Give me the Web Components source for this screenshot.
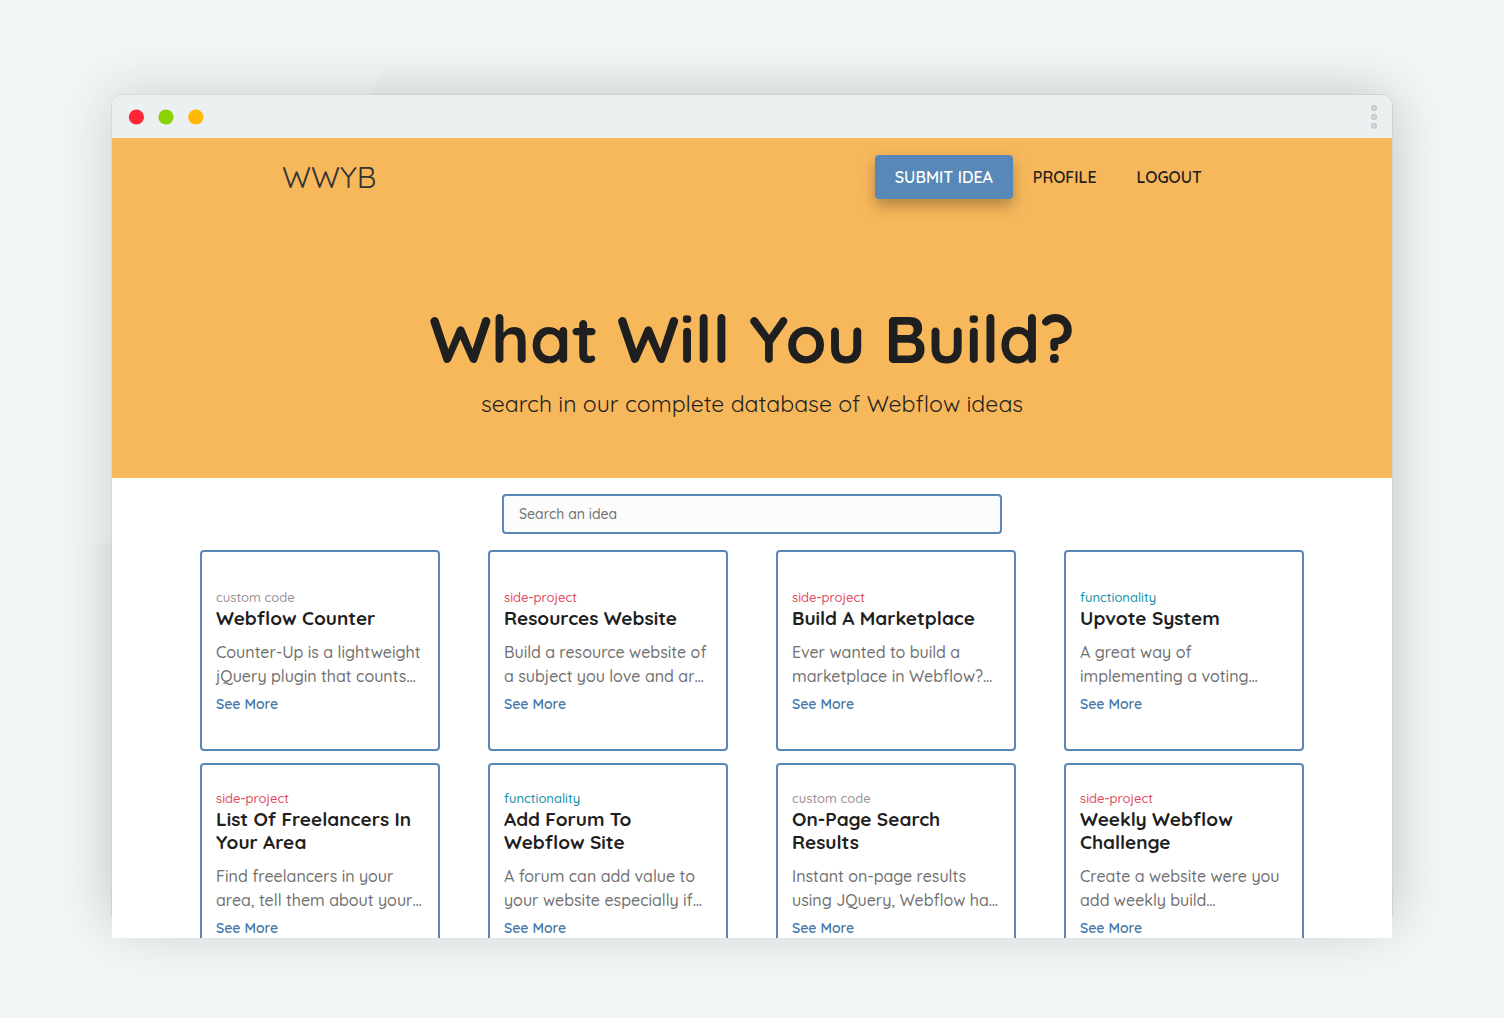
<!DOCTYPE html>
<html lang="en">
<head>
<meta charset="utf-8">
<meta name="viewport" content="width=device-width, initial-scale=1">
<title>What Will You Build?</title>
<style>
*{
    box-sizing: border-box;
}
:root{
    --color-blue: #5788b7;
    --color-hero: #f7b85c;
    --color-ink: #1f1f1f;
    --color-page: #f2f6f7;
}
body{
    margin: 0;
    height: 100vh;
    padding: 94px 111px 80px;
    display: flex;
    flex-direction: column;
    overflow: hidden;
    background: var(--color-page);
    color: var(--color-ink);
    font-family: Quicksand, Lato, sans-serif;
}
</style>
</head>
<body>
<browser-window>
    <site-hero>
        <site-nav slot="nav">
            <nav-link primary>SUBMIT IDEA</nav-link>
            <nav-link>PROFILE</nav-link>
            <nav-link>LOGOUT</nav-link>
        </site-nav>
        What Will You Build?
        <span slot="subtitle">search in our complete database of Webflow ideas</span>
    </site-hero>
    <search-box placeholder="Search an idea"></search-box>
    <idea-grid>
        <idea-card tag="custom code" name="Webflow Counter">Counter-Up is a lightweight<br>jQuery plugin that counts…</idea-card>
        <idea-card tag="side-project" name="Resources Website">Build a resource website of<br>a subject you love and ar…</idea-card>
        <idea-card tag="side-project" name="Build A Marketplace">Ever wanted to build a<br>marketplace in Webflow?…</idea-card>
        <idea-card tag="functionality" name="Upvote System">A great way of<br>implementing a voting…</idea-card>
        <idea-card tag="side-project" name="List Of Freelancers In Your Area">Find freelancers in your<br>area, tell them about your…</idea-card>
        <idea-card tag="functionality" name="Add Forum To Webflow Site">A forum can add value to<br>your website especially if…</idea-card>
        <idea-card tag="custom code" name="On-Page Search Results">Instant on-page results<br>using JQuery, Webflow ha…</idea-card>
        <idea-card tag="side-project" name="Weekly Webflow Challenge">Create a website were you<br>add weekly build…</idea-card>
    </idea-grid>
</browser-window>

<script>
//window chrome around the page, content goes in the slot
class BrowserWindow extends HTMLElement{
    constructor(){
        super();
        this.attachShadow({ mode: 'open' });
        this.shadowRoot.innerHTML = `
        <style>
        :host{
            position: relative;
            display: flex;
            flex-direction: column;
            flex: 1;
            min-height: 0;
            padding: 1px 1px 0;
        }
        /* outline and shadow stop a little above the bottom of the page */
        .outline{
            position: absolute;
            inset: 0 0 12px;
            border: 1px solid #cdd2d3;
            border-radius: 11px;
            box-shadow: 0 0 56px rgba(0, 0, 0, 0.2);
        }
        .blob{
            position: absolute;
            left: -51px;
            top: -94px;
            width: 340px;
            height: 560px;
            fill: var(--color-page);
            opacity: 0.24;
        }
        header{
            position: relative;
            display: flex;
            align-items: center;
            justify-content: space-between;
            flex: none;
            height: 43px;
            padding: 0 14px 0 16px;
            background: #ebf0f0;
            border-radius: 10px 10px 0 0;
        }
        svg{
            display: block;
        }
        main{
            position: relative;
            flex: 1;
            min-height: 0;
            overflow: hidden;
            background: white;
        }
        </style>
        <div class="outline"></div>
        <svg class="blob" viewBox="0 0 340 560" aria-hidden="true"><path d="M0 0H332C336 40 332 68 309 94C260 150 200 240 160 340C130 430 110 544 40 544C22 544 6 532 0 518Z"/></svg>
        <header>
            <svg width="76" height="16" aria-hidden="true">
                <circle cx="8.4" cy="8" r="7.6" fill="#ff2636"/>
                <circle cx="38" cy="8" r="7.6" fill="#8ad200"/>
                <circle cx="67.8" cy="8" r="7.6" fill="#ffb700"/>
            </svg>
            <svg width="8" height="26" fill="#d9dedf" stroke="#c1c7ca" stroke-width="1.5" aria-hidden="true">
                <circle cx="4" cy="4" r="2.3"/>
                <circle cx="4" cy="13" r="2.3"/>
                <circle cx="4" cy="21.7" r="2.3"/>
            </svg>
        </header>
        <main><slot></slot></main>
        `;
    }
}
customElements.define('browser-window', BrowserWindow);

//orange area, title is the default slot
class SiteHero extends HTMLElement{
    constructor(){
        super();
        this.attachShadow({ mode: 'open' });
        this.shadowRoot.innerHTML = `
        <style>
        :host{
            display: block;
            padding: 17px 32px 58px;
            background: var(--color-hero);
            text-align: center;
        }
        h1{
            margin: 100px 0 0;
            font-size: 66px;
            line-height: 80px;
            font-weight: 700;
        }
        p{
            margin: 9px 0 0;
            font-size: 23px;
            line-height: 32px;
            font-weight: 400;
        }
        </style>
        <slot name="nav"></slot>
        <h1><slot></slot></h1>
        <p><slot name="subtitle"></slot></p>
        `;
    }
}
customElements.define('site-hero', SiteHero);

class SiteNav extends HTMLElement{
    constructor(){
        super();
        this.attachShadow({ mode: 'open' });
        this.shadowRoot.innerHTML = `
        <style>
        :host{
            display: block;
            max-width: 940px;
            margin: 0 auto;
        }
        nav{
            display: flex;
            align-items: center;
        }
        .logo{
            margin-right: auto;
            color: #333;
            font-size: 30px;
            line-height: 42px;
            font-weight: 400;
            text-decoration: none;
        }
        </style>
        <nav>
            <a class="logo" href="#">WWYB</a>
            <slot></slot>
        </nav>
        `;
    }
}
customElements.define('site-nav', SiteNav);

class NavLink extends HTMLElement{
    constructor(){
        super();
        this.attachShadow({ mode: 'open' });
        this.shadowRoot.innerHTML = `
        <style>
        :host{
            display: block;
        }
        a{
            display: block;
            padding: 12px 20px;
            color: var(--color-ink);
            font-size: 16px;
            line-height: 20px;
            font-weight: 600;
            text-decoration: none;
        }
        :host([primary]) a{
            background: var(--color-blue);
            color: white;
            border-radius: 4px;
            box-shadow: 0 7px 14px rgba(0, 0, 0, 0.28);
        }
        </style>
        <a href="#"><slot></slot></a>
        `;
    }
}
customElements.define('nav-link', NavLink);

class SearchBox extends HTMLElement{
    constructor(){
        super();
        this.attachShadow({ mode: 'open' });
        this.shadowRoot.innerHTML = `
        <style>
        :host{
            display: block;
            width: 500px;
            max-width: 100%;
            margin: 16px auto;
        }
        input{
            display: block;
            box-sizing: border-box;
            width: 100%;
            height: 40px;
            margin: 0;
            padding: 0 15px;
            border: 2px solid var(--color-blue);
            border-radius: 4px;
            background: #fcfcfc;
            color: #333;
            font: 500 14px/20px Quicksand, Lato, sans-serif;
        }
        input::placeholder{
            color: #6f6f6f;
            opacity: 1;
        }
        </style>
        <input type="search">
        `;
    }
    connectedCallback(){
        const input = this.shadowRoot.querySelector('input');
        input.placeholder = this.getAttribute('placeholder');
        input.setAttribute('aria-label', input.placeholder);
    }
}
customElements.define('search-box', SearchBox);

class IdeaGrid extends HTMLElement{
    constructor(){
        super();
        this.attachShadow({ mode: 'open' });
        this.shadowRoot.innerHTML = `
        <style>
        :host{
            display: grid;
            grid-template-columns: repeat(auto-fit, 240px);
            grid-auto-rows: minmax(201px, auto);
            justify-content: center;
            gap: 12px 48px;
            padding: 0 64px;
        }
        </style>
        <slot></slot>
        `;
    }
}
customElements.define('idea-grid', IdeaGrid);

//tag and name come from attributes, the description from the slot
class IdeaCard extends HTMLElement{
    constructor(){
        super();
        this.attachShadow({ mode: 'open' });
        this.shadowRoot.innerHTML = `
        <style>
        :host{
            display: flex;
            flex-direction: column;
            justify-content: center;
            align-items: flex-start;
            padding: 14px;
            border: 2px solid var(--color-blue);
            border-radius: 4px;
            background: white;
        }
        .tag{
            color: #9b9090;
            font-size: 13px;
            line-height: 19px;
            font-weight: 500;
        }
        :host([tag="side-project"]) .tag{
            color: #e2475d;
        }
        :host([tag="functionality"]) .tag{
            color: #0f90a8;
        }
        h2{
            margin: 0 0 10px;
            font-size: 19px;
            line-height: 23px;
            font-weight: 700;
        }
        p{
            margin: 0 0 6px;
            color: #707070;
            font-size: 16px;
            line-height: 24px;
            font-weight: 500;
            white-space: nowrap;
        }
        a{
            color: #4577a8;
            font-size: 14px;
            line-height: 20px;
            font-weight: 600;
            text-decoration: none;
        }
        </style>
        <span class="tag"></span>
        <h2></h2>
        <p><slot></slot></p>
        <a href="#">See More</a>
        `;
    }
    connectedCallback(){
        this.shadowRoot.querySelector('.tag').textContent = this.getAttribute('tag');
        this.shadowRoot.querySelector('h2').textContent = this.getAttribute('name');
    }
}
customElements.define('idea-card', IdeaCard);
</script>
</body>
</html>
